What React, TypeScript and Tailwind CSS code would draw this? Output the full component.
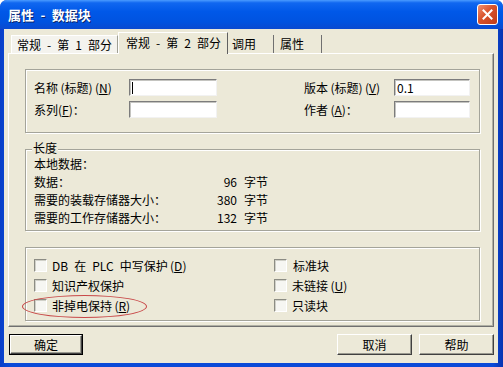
import React from "react";

const S = "\u2002";

const M = ({ c }: { c: string }) => (
  <>
    (<span className="underline underline-offset-1">{c}</span>)
  </>
);

const Input = ({ w, value, cursor }: { w: string; value?: string; cursor?: boolean }) => (
  <div
    className={`${w} h-[17px] bg-white border border-t-[#7c7c7c] border-l-[#7c7c7c] border-b-[#f2f2f2] border-r-[#f2f2f2] shadow-[inset_1px_1px_0_#c4c4c0] flex items-center pl-[2px] text-[12px] leading-none`}
  >
    {cursor && <span className="w-px h-[12px] bg-black" />}
    {value}
  </div>
);

const Box = () => (
  <span className="w-[13px] h-[13px] shrink-0 bg-[#f6f6f2] border border-t-[#8c8c84] border-l-[#8c8c84] border-b-white border-r-white shadow-[inset_1px_1px_0_#d0d0c8]" />
);

const Check = ({ children, gap = "gap-[5px]" }: { children: React.ReactNode; gap?: string }) => (
  <div className={`flex items-center h-[19px] ${gap}`}>
    <Box />
    <span>{children}</span>
  </div>
);

const Group = ({ className, children }: { className: string; children: React.ReactNode }) => (
  <div
    className={`relative ml-[16px] w-[455px] border border-[#a4a49a] shadow-[1px_1px_0_#ffffff,inset_1px_1px_0_#ffffff] ${className}`}
  >
    {children}
  </div>
);

const Btn = ({ children, def }: { children: React.ReactNode; def?: boolean }) => (
  <div
    className={`h-[21px] flex items-center justify-center ${def ? "w-[74px] border border-black" : "w-[75px]"}`}
  >
    <div className="w-full h-full flex items-center justify-center border border-t-white border-l-white border-b-[#404040] border-r-[#404040] shadow-[inset_-1px_-1px_0_#9a9a90]">
      {children}
    </div>
  </div>
);

export default function App() {
  return (
    <div className="w-[503px] h-[367px] flex flex-col bg-[linear-gradient(to_right,#0a3fc8,#0a4ad8_2%,#0a4ad8_98%,#0833b0)] rounded-t-[7px] overflow-hidden font-['Noto_Sans_CJK_SC',sans-serif] text-[12px] text-black">
      {/* title bar */}
      <div className="h-[29px] shrink-0 flex items-center justify-between pl-[8px] pr-[5px] bg-[linear-gradient(to_bottom,#4a9bff_0%,#1067f0_10%,#0058e8_40%,#0053e0_75%,#0a4ad0_100%)]">
        <span className="text-white font-bold text-[13px] leading-none [text-shadow:1px_1px_0_#0a246a]">
          属性{S}-{S}数据块
        </span>
        <div className="w-[21px] h-[21px] rounded-[3px] border border-white bg-[linear-gradient(135deg,#f09070,#d8522c_45%,#c03c18)] flex items-center justify-center">
          <svg width="11" height="11" viewBox="0 0 11 11">
            <path d="M1.5 1.5 L9.5 9.5 M9.5 1.5 L1.5 9.5" stroke="white" strokeWidth="2" strokeLinecap="square" />
          </svg>
        </div>
      </div>

      {/* body */}
      <div className="flex-1 ml-[4px] mr-[5px] mb-[4px] bg-[#ece9d8] flex flex-col pt-[3px] px-[4px]">
        {/* tabs */}
        <div className="h-[22px] flex items-end pl-[3px] relative z-10 leading-none">
          <div className="w-[107px] h-[18px] mb-[1px] flex items-center pl-[5px] bg-[#f4f3ee] border-t border-l border-t-white border-l-white border-r border-r-[#a0a094] whitespace-pre">
            常规{S}-{S}第{S}1{S}部分
          </div>
          <div className="w-[110px] h-[22px] flex items-start pt-[4px] pl-[7px] bg-[#ece9d8] border-t border-l border-t-white border-l-white border-r border-r-[#606060] whitespace-pre">
            常规{S}-{S}第{S}2{S}部分
          </div>
          <div className="w-[46px] h-[18px] mb-[1px] flex items-center pl-[4px] border-r border-r-[#707070]">
            调用
          </div>
          <div className="w-[48px] h-[18px] mb-[1px] flex items-center pl-[6px] border-r border-r-[#707070]">
            属性
          </div>
        </div>

        {/* panel */}
        <div className="h-[274px] -mt-px border border-t-white border-l-white border-b-[#707070] border-r-[#707070] shadow-[inset_-1px_-1px_0_#b0b0a4] flex flex-col pt-[15px]">
          <Group className="h-[64px] flex pt-[9px] pl-[8px]">
            <div className="w-[270px] flex flex-col gap-[5px]">
              <div className="flex items-center h-[17px]">
                <span className="w-[95px]">
                  名称{"\u2009"}(标题){"\u2009"}<M c="N" />
                </span>
                <Input w="w-[88px]" cursor />
              </div>
              <div className="flex items-center h-[17px]">
                <span className="w-[95px]">
                  系列<M c="F" />：
                </span>
                <Input w="w-[88px]" />
              </div>
            </div>
            <div className="flex flex-col gap-[5px]">
              <div className="flex items-center h-[17px]">
                <span className="w-[90px]">
                  版本{"\u2009"}(标题){"\u2009"}<M c="V" />
                </span>
                <Input w="w-[76px]" value="0.1" />
              </div>
              <div className="flex items-center h-[17px]">
                <span className="w-[90px]">
                  作者{"\u2009"}<M c="A" />：
                </span>
                <Input w="w-[76px]" />
              </div>
            </div>
          </Group>

          <Group className="h-[82px] mt-[16px] pt-[5px] pl-[8px] flex flex-col leading-[14px]">
            <span className="absolute -top-[8px] left-[6px] px-[1px] bg-[#ece9d8] leading-[12px]">长度</span>
            <div className="h-[18px] flex items-center">本地数据：</div>
            {[
              ["数据：", "96"],
              ["需要的装载存储器大小：", "380"],
              ["需要的工作存储器大小：", "132"],
            ].map(([l, n]) => (
              <div key={l} className="h-[18px] flex items-center">
                <div className="w-[203px] flex justify-between">
                  <span>{l}</span>
                  <span>{n}</span>
                </div>
                <span className="ml-[7px]">字节</span>
              </div>
            ))}
          </Group>

          <Group className="h-[74px] mt-[16px] pt-[8px] pl-[8px] flex">
            <div className="w-[240px] flex flex-col gap-[1px]">
              <Check>
                <span className="whitespace-pre">
                  DB{S}在{S}PLC{S}中写保护{"\u2009"}<M c="D" />
                </span>
              </Check>
              <Check>知识产权保护</Check>
              <div className="relative">
                <Check>
                  非掉电保持{"\u2009"}<M c="R" />
                </Check>
                <span className="absolute -left-[12px] -top-[1px] w-[125px] h-[23px] rounded-[50%] border border-[#c84848]" />
              </div>
            </div>
            <div className="flex flex-col gap-[1px]">
              <Check gap="gap-[6px]">标准块</Check>
              <Check gap="gap-[5px]">
                未链接{"\u2009"}<M c="U" />
              </Check>
              <Check gap="gap-[5px]">只读块</Check>
            </div>
          </Group>
        </div>

        {/* buttons */}
        <div className="mt-[7px] flex items-center pl-[1px]">
          <Btn def>确定</Btn>
          <div className="flex-1" />
          <Btn>取消</Btn>
          <div className="w-[7px]" />
          <Btn>帮助</Btn>
        </div>
      </div>
    </div>
  );
}
